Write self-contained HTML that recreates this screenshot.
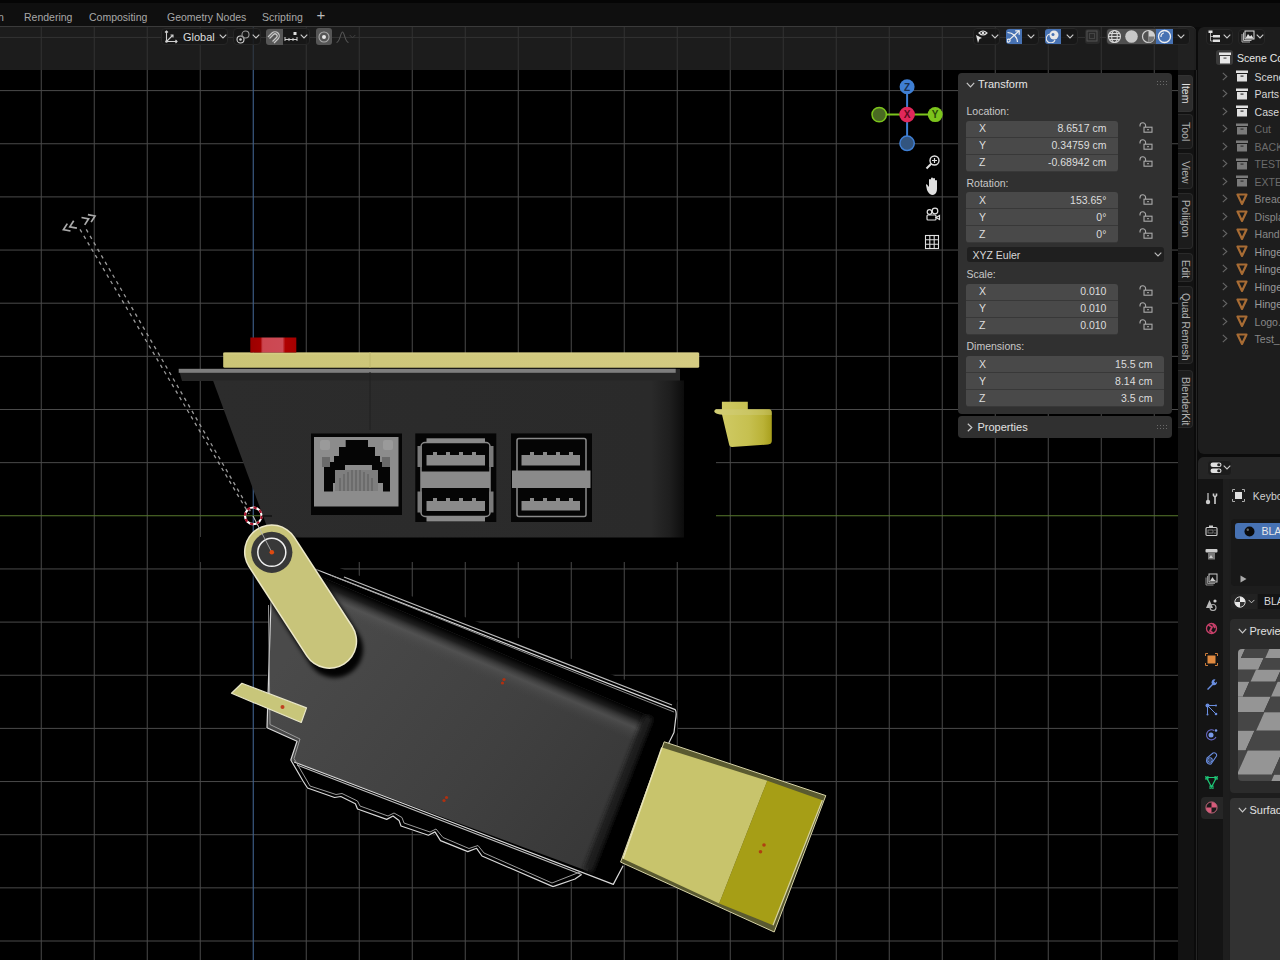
<!DOCTYPE html>
<html><head><meta charset="utf-8">
<style>
*{box-sizing:border-box}
html,body{margin:0;padding:0;width:1280px;height:960px;overflow:hidden;background:#0b0b0b;font-family:"Liberation Sans",sans-serif;font-size:10.5px;color:#ccc}
.a{position:absolute}
#top{left:0;top:0;width:1280px;height:27px;background:#0f0f0f;border-top:3px solid #050505}
.tab{position:absolute;top:7.7px;line-height:12px;color:#a8a8a8;font-size:10.5px;white-space:nowrap}
#vp{left:0;top:0}
#hdr{left:0;top:26px;width:1196px;height:44px;background:rgba(40,40,40,0.7);border-top:1px solid #3a3a3a;border-top-right-radius:6px}
.btn{position:absolute;border:1px solid #262626;background:rgba(22,22,22,0.7);border-radius:4px}
#npanel{left:958px;top:73px;width:214px;height:341px;background:#303030;border-radius:4px}
#props{left:958px;top:416px;width:214px;height:22px;background:#303030;border-radius:4px}
.lbl{position:absolute;color:#c8c8c8;font-size:10.5px;line-height:12px;white-space:nowrap}
.fld{position:absolute;left:8px;width:152px;height:17px;background:#494949;color:#ddd;border-bottom:1px solid #383838}
.fld .k{position:absolute;left:13px;top:1.9px;line-height:12px}
.fld .v{position:absolute;right:11.6px;top:1.9px;line-height:12px;white-space:nowrap}
.lock{position:absolute;left:181px;width:14px;height:11px}
.vtab{position:absolute;left:1178px;width:15px;background:#1c1c1c;border:1px solid #2a2a2a;border-left:none;border-radius:0 4px 4px 0}
.vtab span{position:absolute;line-height:12px;transform-origin:0 0;white-space:nowrap;color:#b0b0b0;font-size:10.5px}
#outl{left:1198px;top:27px;width:82px;height:427px;background:#1d1d1d;border-radius:6px 0 0 6px}
.orow{position:absolute;left:0;height:17px;width:82px;white-space:nowrap;font-size:10.5px}
#prop{left:1198px;top:457px;width:82px;height:503px;background:#1d1d1d;border-top-left-radius:6px}
</style></head><body>
<div class="a" id="top">
  <span class="tab" style="left:-2px">n</span>
  <span class="tab" style="left:24px">Rendering</span>
  <span class="tab" style="left:89px">Compositing</span>
  <span class="tab" style="left:167px">Geometry Nodes</span>
  <span class="tab" style="left:262px">Scripting</span>
  <span class="tab" style="left:316.5px;font-size:15px;top:5.5px;color:#bbb">+</span>
</div>
<!--VP-->
<svg class="a" id="vp" width="1196" height="960" viewBox="0 0 1196 960">
  <defs>
    <linearGradient id="red" x1="0" x2="1" y1="0" y2="0">
      <stop offset="0" stop-color="#9a0000"/><stop offset="0.22" stop-color="#a60000"/><stop offset="0.27" stop-color="#cc4650"/><stop offset="0.7" stop-color="#cc4a55"/><stop offset="0.76" stop-color="#b00000"/><stop offset="1" stop-color="#a40000"/>
    </linearGradient>
    <linearGradient id="casebody" x1="0" x2="1" y1="0" y2="0">
      <stop offset="0" stop-color="#2c2c2c"/><stop offset="0.93" stop-color="#2a2a2a"/><stop offset="0.97" stop-color="#1e1e1e"/><stop offset="1" stop-color="#0c0c0c"/>
    </linearGradient>
    <linearGradient id="board" gradientUnits="userSpaceOnUse" x1="330" y1="600" x2="620" y2="820">
      <stop offset="0" stop-color="#4a4a4a"/><stop offset="0.6" stop-color="#404040"/><stop offset="1" stop-color="#383838"/>
    </linearGradient>
    <linearGradient id="yel" x1="0" x2="1" y1="0" y2="0">
      <stop offset="0" stop-color="#cbc576"/><stop offset="1" stop-color="#d4cb82"/>
    </linearGradient>
    <linearGradient id="boardtop" gradientUnits="userSpaceOnUse" x1="400" y1="610.3" x2="388.3" y2="637.9">
      <stop offset="0" stop-color="#000" stop-opacity="1"/><stop offset="0.25" stop-color="#1a1a1a" stop-opacity="0.9"/><stop offset="0.55" stop-color="#5a5a5a" stop-opacity="0.55"/><stop offset="1" stop-color="#484848" stop-opacity="0"/>
    </linearGradient>
    <linearGradient id="knobg" gradientUnits="userSpaceOnUse" x1="714" y1="0" x2="772" y2="0">
      <stop offset="0" stop-color="#d2cd6a"/><stop offset="0.6" stop-color="#c6c050"/><stop offset="0.85" stop-color="#bab236"/><stop offset="1" stop-color="#a89f1c"/>
    </linearGradient>
    <filter id="blur2" filterUnits="userSpaceOnUse" x="0" y="0" width="1196" height="960"><feGaussianBlur stdDeviation="2"/></filter>
    <filter id="blur4" filterUnits="userSpaceOnUse" x="0" y="0" width="1196" height="960"><feGaussianBlur stdDeviation="4"/></filter>
    <filter id="soft"><feGaussianBlur stdDeviation="0.5"/></filter>
  </defs>
  <rect x="0" y="27" width="1196" height="933" fill="#000"/>
  <rect x="1178" y="27" width="18" height="933" fill="#121212"/><rect x="1194" y="27" width="4" height="933" fill="#0b0b0b"/>
  <!-- grid -->
  <path stroke="#4a4a4a" stroke-width="1" fill="none" d="M41.25 27V960M94.25 27V960M147.25 27V960M200.25 27V960M306.25 27V960M359.25 27V960M412.25 27V960M465.25 27V960M518.25 27V960M571.25 27V960M624.25 27V960M677.25 27V960M730.25 27V960M783.25 27V960M836.25 27V960M889.25 27V960M942.25 27V960M995.25 27V960M1048.25 27V960M1101.25 27V960M1154.25 27V960M0 37.45H1178M0 90.60H1178M0 143.75H1178M0 196.90H1178M0 250.05H1178M0 303.20H1178M0 356.35H1178M0 409.50H1178M0 462.65H1178M0 568.95H1178M0 622.10H1178M0 675.25H1178M0 728.40H1178M0 781.55H1178M0 834.70H1178M0 887.85H1178M0 941.00H1178"/>
  <path stroke="#40628e" stroke-width="1.1" d="M253.25 27V960"/>
  <path stroke="#587a2e" stroke-width="1.1" d="M0 515.8H1178"/>
  <!-- relationship dashed line -->
  <path d="M80 229.4L249 514M86.25 229.4L252 514" stroke="#9a9a9a" stroke-width="1.3" stroke-dasharray="3.5 4" fill="none"/>
  <path d="M253 516L271.8 552.3" stroke="#ccc" stroke-width="0.8" fill="none"/>
  <path d="M87.9 214.7L95 216L91.1 222.1M81.5 217.5L88.6 218.8L84.7 224.9M70.5 231L63.4 229.7L67.3 223.6M76.9 228.1L69.8 226.8L73.7 220.7" stroke="#aaa" stroke-width="1.7" fill="none"/>
  <!-- CASE halo -->
  <path d="M271 537H716V372H684V562H200Z" fill="#000"/><rect x="200" y="537" width="516" height="25" fill="#000"/>
  <!-- case lid -->
  <path d="M178.7 369H680V381H182Z" fill="#262626"/>
  <rect x="223" y="367" width="476" height="2" fill="#000"/><rect x="178.7" y="368.8" width="497" height="4" fill="#7e7e7e"/>
  <!-- case body -->
  <path d="M213 380.5H684V537.5H271Z" fill="url(#casebody)"/>
  <path d="M370 372V430" stroke="#202020" stroke-width="1"/>
  <!-- yellow bar -->
  <rect x="223.2" y="352.5" width="476" height="15.3" rx="1.5" fill="url(#yel)"/>
  <rect x="223.2" y="352.5" width="476" height="2" fill="#d8d08a" opacity="0.6"/>
  <path d="M370 352V368" stroke="#bdb56a" stroke-width="0.8"/>
  <!-- red button -->
  <rect x="250.3" y="337.5" width="46" height="15" fill="url(#red)"/>
  <!-- ethernet port -->
  <rect x="311" y="433.5" width="91" height="81.5" fill="#050505"/>
  <path fill="#8c8c8c" d="M314 437H398.5V506.5H314Z"/>
  <path fill="#050505" d="M345.7 440H368V447H375V456H380V462H390V491.5H383V483H377V473H372V465H345V473H339V483H333V491.5H324V462H334V456H339V447H345.7Z"/>
  <path fill="#7e7e7e" d="M335 470H378V491H335Z"/>
  <path stroke="#5a5a5a" stroke-width="1" d="M340 478V491M344 474V491M348 472V491M352 470V491M356 470V491M360 470V491M364 472V491M368 474V491M372 478V491"/>
  <rect x="322" y="457" width="8" height="10" fill="#6a6a6a"/>
  <rect x="382" y="457" width="8" height="10" fill="#6a6a6a"/>
  <rect x="320" y="440" width="10" height="10" rx="2" fill="#9a9a9a"/>
  <rect x="383" y="440" width="10" height="10" rx="2" fill="#9a9a9a"/>
  <!-- USB 1 -->
  <rect x="415.3" y="433.4" width="81" height="88.6" fill="#050505"/>
  <g fill="none" stroke="#8a8a8a" stroke-width="1.5">
    <rect x="421" y="442.5" width="69" height="74" rx="4"/>
  </g>
  <rect x="426.5" y="438.3" width="58.5" height="4" fill="#8a8a8a"/>
  <rect x="426.5" y="516.5" width="58.5" height="5" fill="#8a8a8a"/>
  <rect x="417.5" y="446" width="4.5" height="21" fill="#7a7a7a"/><rect x="489" y="446" width="4.5" height="21" fill="#7a7a7a"/>
  <rect x="417.5" y="491.5" width="4.5" height="21" fill="#7a7a7a"/><rect x="489" y="491.5" width="4.5" height="21" fill="#7a7a7a"/>
  <rect x="421" y="471.5" width="69" height="16.5" fill="#8a8a8a"/>
  <rect x="426.5" y="455" width="58.5" height="10.5" fill="#8a8a8a"/>
  <rect x="426.5" y="501" width="58.5" height="10" fill="#8a8a8a"/>
  <path fill="#8a8a8a" d="M433 452h4v4h-4zM446 452h4v4h-4zM459 452h4v4h-4zM472 452h4v4h-4zM433 498h4v4h-4zM446 498h4v4h-4zM459 498h4v4h-4zM472 498h4v4h-4z"/>
  <!-- USB 2 -->
  <rect x="511" y="433.4" width="81" height="88.6" fill="#050505"/>
  <g fill="none" stroke="#8a8a8a" stroke-width="1.5">
    <rect x="517" y="438.5" width="69" height="78" rx="2"/>
  </g>
  <rect x="512" y="470.5" width="78.5" height="17.5" fill="#8a8a8a"/>
  <rect x="521.5" y="455" width="58.5" height="10.5" fill="#8a8a8a"/>
  <rect x="521.5" y="501" width="58.5" height="9.5" fill="#8a8a8a"/>
  <path fill="#8a8a8a" d="M530 452h4v4h-4zM543 452h4v4h-4zM556 452h4v4h-4zM569 452h4v4h-4zM530 498h4v4h-4zM543 498h4v4h-4zM556 498h4v4h-4zM569 498h4v4h-4z"/>
  <!-- knob -->
  <path fill="url(#knobg)" d="M721.9 401.7H747.8V409.3H769Q771.8 409.3 771.8 413V441Q771.8 444 768 444.5L732 447Q729.5 447 729 444L722 414.5Q716 414 714.5 412Q714 410 716 409.3H721.9Z"/>
  <path fill="#d4d08a" opacity="0.35" d="M716 409.3H769Q771.8 409.3 771.8 413V415H722Q716 414 714.5 412Q714 410 716 409.3Z"/>
  <!-- 3D cursor -->
  <circle cx="253.3" cy="515.8" r="8.3" fill="none" stroke="#fff" stroke-width="2.2"/>
  <circle cx="253.3" cy="515.8" r="8.3" fill="none" stroke="#a8142c" stroke-width="2.2" stroke-dasharray="3.25 3.25"/>
  <path d="M262 516H272" stroke="#111" stroke-width="1.4"/>
    <!-- board halo -->
  <path d="M268 545L675.2 709.6L676 732.5L665.8 749L620.6 862.1L613.3 884.4L581.6 874.5L575 879L553 886.6L482 856L476.6 848.3L467.8 851.6L440.5 840.6L435 831.9L428.4 835.2L401 826L399 820.4L393 816L386.7 819.4L357.5 809L355.4 803.75L340.8 796.5L334.6 797.5L307.5 788L303 781L290.8 760L297 741.25L267 727.7L271 601L244 556Z" fill="#000" stroke="#000" stroke-width="3" stroke-linejoin="round"/>
  <path d="M300 560L675 707" stroke="#000" stroke-width="14"/>
  <!-- board body -->
  <path d="M272 556L649 716L588 871.3L294 762L290.8 760L297 741.25L267 727.7L271 604Z" fill="url(#board)"/>
  <!-- top black band + highlight -->
  <path d="M272 556L649 716L588 871.3L294 762L290.8 760L297 741.25L267 727.7L271 604Z" fill="url(#boardtop)"/>
  
  <!-- right edge dark band -->
  <path d="M649 716L675 712L675 732L666 749L620 862L613 884L588 871.3Z" fill="#000"/>
  <path d="M649 716L588 871.3" stroke="#1a1a1a" stroke-width="10" filter="url(#blur2)"/>
  <!-- outlines -->
  <g fill="none" stroke="#d8d8d8" stroke-width="1.2" stroke-linejoin="round">
    <path d="M315 569L675.2 709.6Q677 712 675.5 720L674 732.5L665.8 749"/>
    <path d="M344 577L672 705" stroke="#bbb"/>
    <path d="M330 575L674 712" stroke="#999" stroke-width="0.9"/>
    <path d="M271 601L267 727.7L297 741.25L290.8 760L303 781L307.5 788L334.6 797.5L340.8 796.5L355.4 803.75L357.5 809L386.7 819.4L393 816L399 820.4L401 826L428.4 835.2L435 831.9L440.5 840.6L467.8 851.6L476.6 848.3L482 856L553 886.6L575 879L581.6 874.5"/>
    <path d="M294 762L400 802.3L613.3 884.4L623.1 865.8"/>
    <path d="M297 765L581.6 874.5" stroke="#bbb"/>
    <path d="M268.5 605L270 724.5L300 739L294 758.5L306 779L310 786L336 794.5L342 793.5L357.5 801L360 806L388 816L394 813L402 817.5L404 823L430 832L436 829L443 837.5L469 848.5L478 845.5L484 853L552 883L580 872" stroke="#9a9a9a" stroke-width="1"/>
  </g>
  <!-- red dots on board -->
  <circle cx="502.5" cy="683" r="1.6" fill="#b03010"/><circle cx="504" cy="679.5" r="1.6" fill="#b03010"/>
  <circle cx="444" cy="800.5" r="1.6" fill="#b03010"/><circle cx="446.5" cy="797.5" r="1.6" fill="#b03010"/>
  <!-- yellow USB block -->
  <path d="M664.2 741.8L825.8 795.6L774.2 932L620.6 862.1Z" fill="#5a5a30" stroke="#d8d4a8" stroke-width="1"/>
  <path d="M661.9 747.5L767.3 780.7L719.2 903.4L623 858.7Z" fill="#c8c46c"/>
  <path d="M767.3 780.7L822.4 800.2L773 925.2L719.2 903.4Z" fill="#a69e16"/>
  <path d="M661.9 747.5L623 858.7" stroke="#e8e4b8" stroke-width="1.5"/>
  <path d="M822.4 800.2L773 925.2" stroke="#d8d4a0" stroke-width="1.2"/>
  <circle cx="764" cy="845" r="1.8" fill="#b04010"/><circle cx="760.5" cy="851.8" r="1.8" fill="#b04010"/>
  <!-- small yellow tab -->
  <path d="M231.5 693.3L241.9 683.3L306.5 707.9L301.25 722.5Z" fill="#c8c67a" stroke="#e8e6c8" stroke-width="1.2" stroke-linejoin="round"/>
  <circle cx="282.5" cy="706.9" r="2" fill="#c04020"/>
  <!-- hinge arm -->
  <line x1="271.7" y1="552" x2="329.5" y2="641.2" stroke="#000" stroke-width="57" stroke-linecap="round" transform="translate(5,8)" filter="url(#blur2)" opacity="0.95"/>
  <line x1="271.7" y1="552" x2="329.5" y2="641.2" stroke="#ece8c8" stroke-width="55.5" stroke-linecap="round"/>
  <line x1="271.7" y1="552" x2="329.5" y2="641.2" stroke="#c8c47a" stroke-width="52.5" stroke-linecap="round"/>
  <circle cx="271.8" cy="552.3" r="20.6" fill="#383838"/>
  <circle cx="271.8" cy="552.3" r="14" fill="none" stroke="#f0f0f0" stroke-width="1.5"/>
  <path d="M253 516L271.8 552.3" stroke="#bbb" stroke-width="0.8" fill="none"/>
  <circle cx="271.8" cy="552.3" r="2.3" fill="#e04a10"/>

  <!-- nav gizmo -->
  <path d="M907.1 86.8V143.3" stroke="#3f7fd4" stroke-width="2"/>
  <path d="M879.2 114.6H935.2" stroke="#7cc41c" stroke-width="2"/>
  <circle cx="907.1" cy="143.3" r="7.2" fill="#33557f" stroke="#3f7fd4" stroke-width="1.5"/>
  <circle cx="879.2" cy="114.6" r="7.2" fill="#4a6a22" stroke="#7cc41c" stroke-width="1.5"/>
  <circle cx="907.1" cy="86.8" r="7.5" fill="#3f7fd4"/>
  <circle cx="935.2" cy="114.6" r="7.5" fill="#7cc41c"/>
  <circle cx="907.1" cy="114.6" r="7.8" fill="#e0285a"/>
  <text x="907.1" y="90.5" font-size="10" font-family="Liberation Sans" font-weight="bold" fill="#1a3050" text-anchor="middle">Z</text>
  <text x="935.2" y="118.3" font-size="10" font-family="Liberation Sans" font-weight="bold" fill="#2a4a08" text-anchor="middle">Y</text>
  <text x="907.1" y="118.3" font-size="10" font-family="Liberation Sans" font-weight="bold" fill="#5a0a20" text-anchor="middle">X</text>
  <!-- zoom -->
  <g fill="none" stroke="#e0e0e0" stroke-width="1.4">
    <circle cx="934.5" cy="160.5" r="4.5"/><path d="M931.2 163.8L926.5 168.5" stroke-width="2"/><path d="M934.5 158V163M932 160.5H937" stroke-width="1.2"/>
  </g>
  <!-- hand -->
  <path d="M927 190L926 185Q926 184 927 184.5L929 187V180Q929 179 930 179Q931 179 931 180V186V178.5Q931 177.5 932 177.5Q933 177.5 933 178.5V186V179Q933 178 934 178Q935 178 935 179V186V181Q935 180 936 180Q937 180 937 181V189Q937 194 933 195Q929 195 927 190Z" fill="#e0e0e0"/>
  <!-- camera -->
  <g fill="none" stroke="#e0e0e0" stroke-width="1.2">
    <circle cx="929.5" cy="212" r="2.3"/><circle cx="935" cy="211" r="2.8"/><rect x="927" y="215" width="9" height="5" rx="1"/><path d="M936 217.5L939.5 215.5V219.5Z"/>
  </g>
  <!-- grid icon -->
  <g fill="none" stroke="#e0e0e0" stroke-width="1.1">
    <rect x="925.5" y="235.5" width="13" height="13"/><path d="M929.8 235.5V248.5M934.2 235.5V248.5M925.5 239.8H938.5M925.5 244.2H938.5"/>
  </g>
</svg>

<div class="a" style="left:1195.5px;top:70px;width:1px;height:890px;background:#252525"></div>
<div class="a" id="hdr">
  <!-- Global -->
  <div class="btn" style="left:160.6px;top:1.4px;width:67.2px;height:16.9px"></div>
  <svg class="a" style="left:164px;top:3px" width="14" height="14" viewBox="0 0 14 14"><g fill="none" stroke="#d0d0d0" stroke-width="1.1"><path d="M2.5 1V11.5H13"/><path d="M1 2.5L2.5 1L4 2.5M11.5 10L13 11.5L11.5 13"/><path d="M2.5 11.5L9 5M6.5 5H9V7.5"/></g><circle cx="2.5" cy="11.5" r="1.3" fill="#d0d0d0"/></svg>
  <span class="lbl" style="left:183px;top:3.5px;color:#dcdcdc;font-size:11px">Global</span>
  <svg class="a" style="left:219px;top:7px" width="8" height="5" viewBox="0 0 8 5"><path d="M0.7 0.7L4 4L7.3 0.7" fill="none" stroke="#ccc" stroke-width="1.1"/></svg>
  <!-- pivot -->
  <div class="btn" style="left:233px;top:1.4px;width:27.6px;height:16.9px"></div>
  <svg class="a" style="left:236px;top:3px" width="14" height="14" viewBox="0 0 14 14"><g fill="none" stroke="#d0d0d0" stroke-width="1.1"><circle cx="4.5" cy="9.5" r="3.5"/><circle cx="9.5" cy="4.5" r="3.5" stroke="#999"/></g><circle cx="4.5" cy="9.5" r="1.3" fill="#d0d0d0"/></svg>
  <svg class="a" style="left:252px;top:7px" width="8" height="5" viewBox="0 0 8 5"><path d="M0.7 0.7L4 4L7.3 0.7" fill="none" stroke="#ccc" stroke-width="1.1"/></svg>
  <!-- snap -->
  <div class="btn" style="left:265.6px;top:1.4px;width:44.4px;height:16.9px"></div>
  <div class="a" style="left:266px;top:1.8px;width:16.6px;height:16px;background:#565656;border-radius:3px 0 0 3px"></div>
  <svg class="a" style="left:267px;top:3px" width="14" height="14" viewBox="0 0 14 14"><path d="M2.5 8.5L6.5 4.5A2.1 2.1 0 0 1 9.5 7.5L5.5 11.5M1 7L5 3A4.2 4.2 0 0 1 11 9L7 13" fill="none" stroke="#c8c8c8" stroke-width="1.2"/></svg>
  <svg class="a" style="left:284px;top:4px" width="14" height="12" viewBox="0 0 14 12"><g stroke="#d0d0d0" stroke-width="1"><path d="M1 6V10M5 7V10M9 7V10M13 6V10M1 8.5H13"/></g><rect x="9.5" y="1" width="3" height="3" fill="#e0e0e0"/></svg>
  <svg class="a" style="left:300px;top:7px" width="8" height="5" viewBox="0 0 8 5"><path d="M0.7 0.7L4 4L7.3 0.7" fill="none" stroke="#ccc" stroke-width="1.1"/></svg>
  <!-- proportional -->
  <div class="a" style="left:315.6px;top:1.4px;width:16.4px;height:16.9px;background:#565656;border-radius:3px"></div>
  <svg class="a" style="left:317px;top:3px" width="14" height="14" viewBox="0 0 14 14"><circle cx="7" cy="7" r="5" fill="none" stroke="#aaa" stroke-width="1.1"/><circle cx="7" cy="7" r="2" fill="#e8e8e8"/></svg>
  <svg class="a" style="left:336px;top:3px" width="13" height="14" viewBox="0 0 13 14"><path d="M0.5 12.5C4 12.5 4.5 2 6.5 2C8.5 2 9 12.5 12.5 12.5" fill="none" stroke="#555" stroke-width="1.1"/></svg>
  <svg class="a" style="left:349px;top:7px" width="7" height="5" viewBox="0 0 8 5"><path d="M0.7 0.7L4 4L7.3 0.7" fill="none" stroke="#444" stroke-width="1.1"/></svg>
  <!-- right side -->
  <div class="btn" style="left:972.75px;top:1.1px;width:27.5px;height:16.5px"></div>
  <svg class="a" style="left:974px;top:2px" width="15" height="15" viewBox="0 0 15 15"><path d="M5 4Q9 0 13 4Q9 8 5 4Z" fill="none" stroke="#ddd" stroke-width="1.1"/><circle cx="9" cy="4" r="1.3" fill="#ddd"/><path d="M2 6L8 9L5.5 10L4 14Z" fill="#e0e0e0"/></svg>
  <svg class="a" style="left:991px;top:7px" width="8" height="5" viewBox="0 0 8 5"><path d="M0.7 0.7L4 4L7.3 0.7" fill="none" stroke="#ccc" stroke-width="1.1"/></svg>
  <div class="btn" style="left:1005.6px;top:1.1px;width:33.2px;height:16.5px"></div>
  <div class="a" style="left:1005.6px;top:1.5px;width:16.3px;height:15.8px;background:#4772b3;border-radius:3px 0 0 3px"></div>
  <svg class="a" style="left:1007px;top:2px" width="14" height="14" viewBox="0 0 14 14"><g fill="none" stroke="#f0f0f0" stroke-width="1.2"><path d="M0.5 3.5A10 10 0 0 1 10.5 13"/><path d="M2.4 10.6L12.2 1.8"/><path d="M8.2 1.8H12.2V5.8"/><circle cx="1.6" cy="11.6" r="1.5"/></g></svg>
  <svg class="a" style="left:1027px;top:7px" width="8" height="5" viewBox="0 0 8 5"><path d="M0.7 0.7L4 4L7.3 0.7" fill="none" stroke="#ccc" stroke-width="1.1"/></svg>
  <div class="btn" style="left:1045px;top:1.1px;width:33px;height:16.5px"></div>
  <div class="a" style="left:1045px;top:1.5px;width:16.3px;height:15.8px;background:#4772b3;border-radius:3px 0 0 3px"></div>
  <svg class="a" style="left:1046px;top:2px" width="14" height="14" viewBox="0 0 14 14"><circle cx="8" cy="6" r="4.5" fill="#e8e8e8"/><path d="M4 5A4.5 4.5 0 1 0 9 11" fill="none" stroke="#e8e8e8" stroke-width="1.2"/><circle cx="7" cy="5.5" r="1.5" fill="#4772b3"/></svg>
  <svg class="a" style="left:1066px;top:7px" width="8" height="5" viewBox="0 0 8 5"><path d="M0.7 0.7L4 4L7.3 0.7" fill="none" stroke="#ccc" stroke-width="1.1"/></svg>
  <div class="a" style="left:1084.7px;top:1.5px;width:15px;height:15.8px;background:#2a2a2a;border-radius:3px"></div>
  <svg class="a" style="left:1086px;top:3px" width="12" height="12" viewBox="0 0 12 12"><rect x="1" y="1" width="10" height="10" fill="none" stroke="#555" stroke-width="1"/><rect x="3.5" y="3.5" width="5" height="5" fill="none" stroke="#444" stroke-width="1"/></svg>
  <div class="btn" style="left:1106.25px;top:1.1px;width:83.5px;height:16.5px"></div>
  <div class="a" style="left:1106.5px;top:1.5px;width:49.5px;height:15.8px;background:#505050;border-radius:3px 0 0 3px"></div>
  <div class="a" style="left:1156px;top:1.5px;width:17px;height:15.8px;background:#4772b3"></div>
  <svg class="a" style="left:1107px;top:2px" width="15" height="15" viewBox="0 0 15 15"><g fill="none" stroke="#d8d8d8" stroke-width="1.1"><circle cx="7.5" cy="7.5" r="6"/><ellipse cx="7.5" cy="7.5" rx="2.8" ry="6"/><path d="M1.5 7.5H13.5M2.5 4.5H12.5M2.5 10.5H12.5"/></g></svg>
  <svg class="a" style="left:1124px;top:2px" width="15" height="15" viewBox="0 0 15 15"><circle cx="7.5" cy="7.5" r="6.3" fill="#c8c8c8"/></svg>
  <svg class="a" style="left:1141px;top:2px" width="15" height="15" viewBox="0 0 15 15"><circle cx="7.5" cy="7.5" r="6" fill="none" stroke="#d0d0d0" stroke-width="1.2"/><path d="M7.5 1.5A6 6 0 0 1 7.5 13.5Z" fill="#d0d0d0"/><path d="M7.5 7.5H13.5A6 6 0 0 1 7.5 13.5Z" fill="#777"/></svg>
  <svg class="a" style="left:1157px;top:2px" width="15" height="15" viewBox="0 0 15 15"><circle cx="7.5" cy="7.5" r="6" fill="none" stroke="#f0f0f0" stroke-width="1.3"/><path d="M4 8A3.5 3.5 0 0 1 7 4" fill="none" stroke="#f0f0f0" stroke-width="1.2"/></svg>
  <svg class="a" style="left:1177px;top:7px" width="8" height="5" viewBox="0 0 8 5"><path d="M0.7 0.7L4 4L7.3 0.7" fill="none" stroke="#ccc" stroke-width="1.1"/></svg>
</div>

<div class="a" id="npanel">
  <svg class="a" style="left:8px;top:9px" width="9" height="6" viewBox="0 0 9 6"><path d="M0.8 0.8L4.5 4.8L8.2 0.8" fill="none" stroke="#c8c8c8" stroke-width="1.2"/></svg>
  <span class="lbl" style="left:20px;top:5px;color:#e4e4e4;font-size:11px">Transform</span>
  <svg class="a" style="left:199px;top:8px" width="10" height="5" viewBox="0 0 10 5"><g fill="#6a6a6a"><rect x="0" y="0" width="1" height="1"/><rect x="3" y="0" width="1" height="1"/><rect x="6" y="0" width="1" height="1"/><rect x="9" y="0" width="1" height="1"/><rect x="0" y="3" width="1" height="1"/><rect x="3" y="3" width="1" height="1"/><rect x="6" y="3" width="1" height="1"/><rect x="9" y="3" width="1" height="1"/></g></svg>
  <span class="lbl" style="left:8.5px;top:31.5px">Location:</span>
  <div class="fld" style="top:47.5px;border-radius:3px 3px 0 0"><span class="k">X</span><span class="v">8.6517 cm</span></div>
  <div class="fld" style="top:64.5px"><span class="k">Y</span><span class="v">0.34759 cm</span></div>
  <div class="fld" style="top:81.5px;border-radius:0 0 3px 3px"><span class="k">Z</span><span class="v">-0.68942 cm</span></div>
  <span class="lbl" style="left:8.5px;top:103.7px">Rotation:</span>
  <div class="fld" style="top:119.4px;border-radius:3px 3px 0 0"><span class="k">X</span><span class="v">153.65°</span></div>
  <div class="fld" style="top:136.4px"><span class="k">Y</span><span class="v">0°</span></div>
  <div class="fld" style="top:153.4px;border-radius:0 0 3px 3px"><span class="k">Z</span><span class="v">0°</span></div>
  <div class="a" style="left:8.5px;top:174px;width:197px;height:15px;background:#1f1f1f;border-radius:3px"><span class="lbl" style="left:6px;top:1.5px;color:#d8d8d8">XYZ Euler</span>
    <svg class="a" style="left:187px;top:5px" width="8" height="5" viewBox="0 0 8 5"><path d="M0.7 0.7L4 4L7.3 0.7" fill="none" stroke="#bbb" stroke-width="1.1"/></svg></div>
  <span class="lbl" style="left:8.5px;top:195.1px">Scale:</span>
  <div class="fld" style="top:210.5px;border-radius:3px 3px 0 0"><span class="k">X</span><span class="v">0.010</span></div>
  <div class="fld" style="top:227.5px"><span class="k">Y</span><span class="v">0.010</span></div>
  <div class="fld" style="top:244.5px;border-radius:0 0 3px 3px"><span class="k">Z</span><span class="v">0.010</span></div>
  <span class="lbl" style="left:8.5px;top:267px">Dimensions:</span>
  <div class="fld" style="top:282.8px;width:198px;border-radius:3px 3px 0 0"><span class="k">X</span><span class="v">15.5 cm</span></div>
  <div class="fld" style="top:299.8px;width:198px"><span class="k">Y</span><span class="v">8.14 cm</span></div>
  <div class="fld" style="top:316.8px;width:198px;border-radius:0 0 3px 3px"><span class="k">Z</span><span class="v">3.5 cm</span></div>
  <svg class="a" style="left:181px;top:48.7px" width="14" height="12" viewBox="0 0 14 12"><path d="M1 4.5V3.5A2.8 2.8 0 0 1 6.6 3.5V5" fill="none" stroke="#aaa" stroke-width="1.1"/><rect x="5" y="5.2" width="8" height="5" fill="none" stroke="#aaa" stroke-width="1.1"/><rect x="8" y="7.2" width="2" height="1" fill="#aaa"/></svg>
<svg class="a" style="left:181px;top:65.7px" width="14" height="12" viewBox="0 0 14 12"><path d="M1 4.5V3.5A2.8 2.8 0 0 1 6.6 3.5V5" fill="none" stroke="#aaa" stroke-width="1.1"/><rect x="5" y="5.2" width="8" height="5" fill="none" stroke="#aaa" stroke-width="1.1"/><rect x="8" y="7.2" width="2" height="1" fill="#aaa"/></svg>
<svg class="a" style="left:181px;top:82.7px" width="14" height="12" viewBox="0 0 14 12"><path d="M1 4.5V3.5A2.8 2.8 0 0 1 6.6 3.5V5" fill="none" stroke="#aaa" stroke-width="1.1"/><rect x="5" y="5.2" width="8" height="5" fill="none" stroke="#aaa" stroke-width="1.1"/><rect x="8" y="7.2" width="2" height="1" fill="#aaa"/></svg>
<svg class="a" style="left:181px;top:120.6px" width="14" height="12" viewBox="0 0 14 12"><path d="M1 4.5V3.5A2.8 2.8 0 0 1 6.6 3.5V5" fill="none" stroke="#aaa" stroke-width="1.1"/><rect x="5" y="5.2" width="8" height="5" fill="none" stroke="#aaa" stroke-width="1.1"/><rect x="8" y="7.2" width="2" height="1" fill="#aaa"/></svg>
<svg class="a" style="left:181px;top:137.6px" width="14" height="12" viewBox="0 0 14 12"><path d="M1 4.5V3.5A2.8 2.8 0 0 1 6.6 3.5V5" fill="none" stroke="#aaa" stroke-width="1.1"/><rect x="5" y="5.2" width="8" height="5" fill="none" stroke="#aaa" stroke-width="1.1"/><rect x="8" y="7.2" width="2" height="1" fill="#aaa"/></svg>
<svg class="a" style="left:181px;top:154.6px" width="14" height="12" viewBox="0 0 14 12"><path d="M1 4.5V3.5A2.8 2.8 0 0 1 6.6 3.5V5" fill="none" stroke="#aaa" stroke-width="1.1"/><rect x="5" y="5.2" width="8" height="5" fill="none" stroke="#aaa" stroke-width="1.1"/><rect x="8" y="7.2" width="2" height="1" fill="#aaa"/></svg>
<svg class="a" style="left:181px;top:211.7px" width="14" height="12" viewBox="0 0 14 12"><path d="M1 4.5V3.5A2.8 2.8 0 0 1 6.6 3.5V5" fill="none" stroke="#aaa" stroke-width="1.1"/><rect x="5" y="5.2" width="8" height="5" fill="none" stroke="#aaa" stroke-width="1.1"/><rect x="8" y="7.2" width="2" height="1" fill="#aaa"/></svg>
<svg class="a" style="left:181px;top:228.7px" width="14" height="12" viewBox="0 0 14 12"><path d="M1 4.5V3.5A2.8 2.8 0 0 1 6.6 3.5V5" fill="none" stroke="#aaa" stroke-width="1.1"/><rect x="5" y="5.2" width="8" height="5" fill="none" stroke="#aaa" stroke-width="1.1"/><rect x="8" y="7.2" width="2" height="1" fill="#aaa"/></svg>
<svg class="a" style="left:181px;top:245.7px" width="14" height="12" viewBox="0 0 14 12"><path d="M1 4.5V3.5A2.8 2.8 0 0 1 6.6 3.5V5" fill="none" stroke="#aaa" stroke-width="1.1"/><rect x="5" y="5.2" width="8" height="5" fill="none" stroke="#aaa" stroke-width="1.1"/><rect x="8" y="7.2" width="2" height="1" fill="#aaa"/></svg>

</div>
<div class="a" id="props">
  <svg class="a" style="left:9px;top:7px" width="6" height="9" viewBox="0 0 6 9"><path d="M0.8 0.8L4.8 4.5L0.8 8.2" fill="none" stroke="#c8c8c8" stroke-width="1.2"/></svg>
  <span class="lbl" style="left:19.5px;top:5px;color:#e0e0e0;font-size:11px">Properties</span>
  <svg class="a" style="left:199px;top:9px" width="10" height="5" viewBox="0 0 10 5"><g fill="#6a6a6a"><rect x="0" y="0" width="1" height="1"/><rect x="3" y="0" width="1" height="1"/><rect x="6" y="0" width="1" height="1"/><rect x="9" y="0" width="1" height="1"/><rect x="0" y="3" width="1" height="1"/><rect x="3" y="3" width="1" height="1"/><rect x="6" y="3" width="1" height="1"/><rect x="9" y="3" width="1" height="1"/></g></svg>
</div>
<div class="vtab" style="top:75px;height:36.6px;background:#2d2d2d;border-color:#333"><span style="color:#e0e0e0;left:14.4px;top:7px;transform:rotate(90deg)">Item</span></div>
<div class="vtab" style="top:114.4px;height:34.6px"><span style="left:14.4px;top:7px;transform:rotate(90deg)">Tool</span></div>
<div class="vtab" style="top:152.8px;height:36.6px"><span style="left:14.4px;top:7px;transform:rotate(90deg)">View</span></div>
<div class="vtab" style="top:193px;height:55.5px"><span style="left:14.4px;top:6px;transform:rotate(90deg)">Poliigon</span></div>
<div class="vtab" style="top:252.9px;height:29.1px"><span style="left:14.4px;top:6px;transform:rotate(90deg)">Edit</span></div>
<div class="vtab" style="top:286.4px;height:77.3px"><span style="left:14.4px;top:6px;transform:rotate(90deg)">Quad Remesh</span></div>
<div class="vtab" style="top:369.5px;height:58.3px"><span style="left:14.4px;top:6px;transform:rotate(90deg)">BlenderKit</span></div>

<div class="a" id="outl">
<div class="btn" style="left:7.5px;top:1.6px;width:27.5px;height:16px;background:#1a1a1a"></div>
<svg class="a" style="left:10px;top:3px" width="14" height="13" viewBox="0 0 14 13"><g fill="#e0e0e0"><rect x="0.5" y="0.5" width="4" height="2.5"/><rect x="5" y="5" width="7" height="2.5"/><rect x="5" y="9.5" width="7" height="2.5"/></g><path d="M2.5 3V11H5M2.5 6.5H5" fill="none" stroke="#bbb" stroke-width="0.9"/></svg>
<svg class="a" style="left:25px;top:7px" width="8" height="5" viewBox="0 0 8 5"><path d="M0.7 0.7L4 4L7.3 0.7" fill="none" stroke="#ccc" stroke-width="1.1"/></svg>
<div class="btn" style="left:40px;top:1.6px;width:27px;height:16px;background:#1a1a1a"></div>
<svg class="a" style="left:43px;top:3px" width="14" height="13" viewBox="0 0 14 13"><path d="M1 4V12H9" fill="none" stroke="#bbb" stroke-width="0.9"/><path d="M2.5 2.5V10.5H10.5" fill="none" stroke="#ccc" stroke-width="0.9"/><rect x="4" y="1" width="9" height="8" fill="none" stroke="#e0e0e0" stroke-width="1"/><path d="M4.5 8.5L7 4L9 6.5L10.5 5L12.5 8.5Z" fill="#e0e0e0"/></svg>
<svg class="a" style="left:58px;top:7px" width="8" height="5" viewBox="0 0 8 5"><path d="M0.7 0.7L4 4L7.3 0.7" fill="none" stroke="#ccc" stroke-width="1.1"/></svg>
<div class="a" style="left:18.4px;top:23.4px;width:16.4px;height:15px;background:#3a3a3a;border-radius:3px"></div>
<svg class="a" style="left:20.5px;top:25px" width="12" height="12" viewBox="0 0 12 12"><rect x="0" y="0.5" width="12" height="2.5" fill="#e8e8e8"/><rect x="1" y="4" width="10" height="7.5" fill="#e8e8e8"/><rect x="4.5" y="5.5" width="3" height="1.2" fill="#555"/></svg>
<span class="lbl" style="left:39px;top:25.4px;color:#e8e8e8">Scene Collection</span>
<svg class="a" style="left:24px;top:44.5px" width="6" height="9" viewBox="0 0 6 9"><path d="M0.8 0.8L4.8 4.5L0.8 8.2" fill="none" stroke="#666" stroke-width="1.1"/></svg>
<svg class="a" style="left:38px;top:43.0px" width="12" height="12" viewBox="0 0 12 12"><rect x="0" y="0.5" width="12" height="2.5" fill="#e0e0e0"/><rect x="1" y="4" width="10" height="7.5" fill="#e0e0e0"/><rect x="4.5" y="5.5" width="3" height="1.2" fill="#333"/></svg>
<span class="lbl" style="left:56.6px;top:43.8px;color:#d8d8d8">Scene_objects</span>
<svg class="a" style="left:24px;top:62.0px" width="6" height="9" viewBox="0 0 6 9"><path d="M0.8 0.8L4.8 4.5L0.8 8.2" fill="none" stroke="#666" stroke-width="1.1"/></svg>
<svg class="a" style="left:38px;top:60.5px" width="12" height="12" viewBox="0 0 12 12"><rect x="0" y="0.5" width="12" height="2.5" fill="#e0e0e0"/><rect x="1" y="4" width="10" height="7.5" fill="#e0e0e0"/><rect x="4.5" y="5.5" width="3" height="1.2" fill="#333"/></svg>
<span class="lbl" style="left:56.6px;top:61.3px;color:#d8d8d8">Parts</span>
<svg class="a" style="left:24px;top:79.5px" width="6" height="9" viewBox="0 0 6 9"><path d="M0.8 0.8L4.8 4.5L0.8 8.2" fill="none" stroke="#666" stroke-width="1.1"/></svg>
<svg class="a" style="left:38px;top:78.0px" width="12" height="12" viewBox="0 0 12 12"><rect x="0" y="0.5" width="12" height="2.5" fill="#e0e0e0"/><rect x="1" y="4" width="10" height="7.5" fill="#e0e0e0"/><rect x="4.5" y="5.5" width="3" height="1.2" fill="#333"/></svg>
<span class="lbl" style="left:56.6px;top:78.8px;color:#d8d8d8">Case</span>
<svg class="a" style="left:24px;top:97.0px" width="6" height="9" viewBox="0 0 6 9"><path d="M0.8 0.8L4.8 4.5L0.8 8.2" fill="none" stroke="#666" stroke-width="1.1"/></svg>
<svg class="a" style="left:38px;top:95.5px" width="12" height="12" viewBox="0 0 12 12"><rect x="0" y="0.5" width="12" height="2.5" fill="#7a7a7a"/><rect x="1" y="4" width="10" height="7.5" fill="#7a7a7a"/><rect x="4.5" y="5.5" width="3" height="1.2" fill="#333"/></svg>
<span class="lbl" style="left:56.6px;top:96.3px;color:#6c6c6c">Cut</span>
<svg class="a" style="left:24px;top:114.5px" width="6" height="9" viewBox="0 0 6 9"><path d="M0.8 0.8L4.8 4.5L0.8 8.2" fill="none" stroke="#666" stroke-width="1.1"/></svg>
<svg class="a" style="left:38px;top:113.0px" width="12" height="12" viewBox="0 0 12 12"><rect x="0" y="0.5" width="12" height="2.5" fill="#7a7a7a"/><rect x="1" y="4" width="10" height="7.5" fill="#7a7a7a"/><rect x="4.5" y="5.5" width="3" height="1.2" fill="#333"/></svg>
<span class="lbl" style="left:56.6px;top:113.8px;color:#6c6c6c">BACKUP</span>
<svg class="a" style="left:24px;top:132.0px" width="6" height="9" viewBox="0 0 6 9"><path d="M0.8 0.8L4.8 4.5L0.8 8.2" fill="none" stroke="#666" stroke-width="1.1"/></svg>
<svg class="a" style="left:38px;top:130.5px" width="12" height="12" viewBox="0 0 12 12"><rect x="0" y="0.5" width="12" height="2.5" fill="#7a7a7a"/><rect x="1" y="4" width="10" height="7.5" fill="#7a7a7a"/><rect x="4.5" y="5.5" width="3" height="1.2" fill="#333"/></svg>
<span class="lbl" style="left:56.6px;top:131.3px;color:#6c6c6c">TEST_PARTS</span>
<svg class="a" style="left:24px;top:149.5px" width="6" height="9" viewBox="0 0 6 9"><path d="M0.8 0.8L4.8 4.5L0.8 8.2" fill="none" stroke="#666" stroke-width="1.1"/></svg>
<svg class="a" style="left:38px;top:148.0px" width="12" height="12" viewBox="0 0 12 12"><rect x="0" y="0.5" width="12" height="2.5" fill="#7a7a7a"/><rect x="1" y="4" width="10" height="7.5" fill="#7a7a7a"/><rect x="4.5" y="5.5" width="3" height="1.2" fill="#333"/></svg>
<span class="lbl" style="left:56.6px;top:148.8px;color:#6c6c6c">EXTERNAL</span>
<svg class="a" style="left:24px;top:167.0px" width="6" height="9" viewBox="0 0 6 9"><path d="M0.8 0.8L4.8 4.5L0.8 8.2" fill="none" stroke="#666" stroke-width="1.1"/></svg>
<svg class="a" style="left:38px;top:165.5px" width="12" height="12" viewBox="0 0 12 12"><path d="M1.5 1.5H10.5L6 11Z" fill="none" stroke="#a86c34" stroke-width="2.2" stroke-linejoin="round"/></svg>
<span class="lbl" style="left:56.6px;top:166.3px;color:#888">Breadboard</span>
<svg class="a" style="left:24px;top:184.5px" width="6" height="9" viewBox="0 0 6 9"><path d="M0.8 0.8L4.8 4.5L0.8 8.2" fill="none" stroke="#666" stroke-width="1.1"/></svg>
<svg class="a" style="left:38px;top:183.0px" width="12" height="12" viewBox="0 0 12 12"><path d="M1.5 1.5H10.5L6 11Z" fill="none" stroke="#a86c34" stroke-width="2.2" stroke-linejoin="round"/></svg>
<span class="lbl" style="left:56.6px;top:183.8px;color:#888">Display</span>
<svg class="a" style="left:24px;top:202.0px" width="6" height="9" viewBox="0 0 6 9"><path d="M0.8 0.8L4.8 4.5L0.8 8.2" fill="none" stroke="#666" stroke-width="1.1"/></svg>
<svg class="a" style="left:38px;top:200.5px" width="12" height="12" viewBox="0 0 12 12"><path d="M1.5 1.5H10.5L6 11Z" fill="none" stroke="#a86c34" stroke-width="2.2" stroke-linejoin="round"/></svg>
<span class="lbl" style="left:56.6px;top:201.3px;color:#888">Handle</span>
<svg class="a" style="left:24px;top:219.5px" width="6" height="9" viewBox="0 0 6 9"><path d="M0.8 0.8L4.8 4.5L0.8 8.2" fill="none" stroke="#666" stroke-width="1.1"/></svg>
<svg class="a" style="left:38px;top:218.0px" width="12" height="12" viewBox="0 0 12 12"><path d="M1.5 1.5H10.5L6 11Z" fill="none" stroke="#a86c34" stroke-width="2.2" stroke-linejoin="round"/></svg>
<span class="lbl" style="left:56.6px;top:218.8px;color:#999">Hinge_part</span>
<svg class="a" style="left:24px;top:237.0px" width="6" height="9" viewBox="0 0 6 9"><path d="M0.8 0.8L4.8 4.5L0.8 8.2" fill="none" stroke="#666" stroke-width="1.1"/></svg>
<svg class="a" style="left:38px;top:235.5px" width="12" height="12" viewBox="0 0 12 12"><path d="M1.5 1.5H10.5L6 11Z" fill="none" stroke="#a86c34" stroke-width="2.2" stroke-linejoin="round"/></svg>
<span class="lbl" style="left:56.6px;top:236.3px;color:#999">Hinge_part</span>
<svg class="a" style="left:24px;top:254.5px" width="6" height="9" viewBox="0 0 6 9"><path d="M0.8 0.8L4.8 4.5L0.8 8.2" fill="none" stroke="#666" stroke-width="1.1"/></svg>
<svg class="a" style="left:38px;top:253.0px" width="12" height="12" viewBox="0 0 12 12"><path d="M1.5 1.5H10.5L6 11Z" fill="none" stroke="#a86c34" stroke-width="2.2" stroke-linejoin="round"/></svg>
<span class="lbl" style="left:56.6px;top:253.8px;color:#999">Hinge_part</span>
<svg class="a" style="left:24px;top:272.0px" width="6" height="9" viewBox="0 0 6 9"><path d="M0.8 0.8L4.8 4.5L0.8 8.2" fill="none" stroke="#666" stroke-width="1.1"/></svg>
<svg class="a" style="left:38px;top:270.5px" width="12" height="12" viewBox="0 0 12 12"><path d="M1.5 1.5H10.5L6 11Z" fill="none" stroke="#a86c34" stroke-width="2.2" stroke-linejoin="round"/></svg>
<span class="lbl" style="left:56.6px;top:271.3px;color:#999">Hinge_part</span>
<svg class="a" style="left:24px;top:289.5px" width="6" height="9" viewBox="0 0 6 9"><path d="M0.8 0.8L4.8 4.5L0.8 8.2" fill="none" stroke="#666" stroke-width="1.1"/></svg>
<svg class="a" style="left:38px;top:288.0px" width="12" height="12" viewBox="0 0 12 12"><path d="M1.5 1.5H10.5L6 11Z" fill="none" stroke="#a86c34" stroke-width="2.2" stroke-linejoin="round"/></svg>
<span class="lbl" style="left:56.6px;top:288.8px;color:#888">Logo.001</span>
<svg class="a" style="left:24px;top:307.0px" width="6" height="9" viewBox="0 0 6 9"><path d="M0.8 0.8L4.8 4.5L0.8 8.2" fill="none" stroke="#666" stroke-width="1.1"/></svg>
<svg class="a" style="left:38px;top:305.5px" width="12" height="12" viewBox="0 0 12 12"><path d="M1.5 1.5H10.5L6 11Z" fill="none" stroke="#a86c34" stroke-width="2.2" stroke-linejoin="round"/></svg>
<span class="lbl" style="left:56.6px;top:306.3px;color:#888">Test_1</span>
</div>
<div class="a" id="prop">
  <div class="a" style="left:0;top:0;width:82px;height:22px;background:#252525;border-top-left-radius:6px"></div>
  <div class="btn" style="left:9px;top:3.3px;width:24.7px;height:15.5px;background:#1c1c1c"></div>
  <svg class="a" style="left:12px;top:5px" width="12" height="12" viewBox="0 0 12 12"><rect x="0.5" y="0.5" width="11" height="4.5" rx="2.25" fill="#e0e0e0"/><rect x="0.5" y="6.5" width="11" height="4.5" rx="2.25" fill="#e0e0e0"/><circle cx="8.8" cy="2.75" r="1.6" fill="#222"/><circle cx="8.8" cy="8.75" r="1.6" fill="#222"/></svg>
  <svg class="a" style="left:25px;top:8px" width="8" height="5" viewBox="0 0 8 5"><path d="M0.7 0.7L4 4L7.3 0.7" fill="none" stroke="#ccc" stroke-width="1.1"/></svg>
  <div class="a" style="left:0;top:22px;width:24.5px;height:481px;background:#141414"></div>
  <div class="a" style="left:24.5px;top:22px;width:6px;height:481px;background:#1e1e1e"></div>
  <div class="a" style="left:2.5px;top:339.5px;width:22.2px;height:22.8px;background:#262626;border-radius:4px 0 0 4px"></div>
  <svg class="a" style="left:6.9px;top:34.5px" width="13" height="13" viewBox="0 0 13 13"><path d="M3 1V8" stroke="#ccc" stroke-width="1.2"/><circle cx="3" cy="10" r="2.2" fill="#ccc"/><path d="M8.5 1.5V3.5L10 5L11.5 3.5V1.5M10 5V12" fill="none" stroke="#ccc" stroke-width="1.6"/></svg>
<svg class="a" style="left:6.9px;top:66.5px" width="13" height="13" viewBox="0 0 13 13"><rect x="1" y="3.5" width="11" height="8" rx="1" fill="none" stroke="#ccc" stroke-width="1.1"/><rect x="4" y="1.5" width="4" height="2" fill="#ccc"/><rect x="3" y="6" width="5" height="3" fill="none" stroke="#888" stroke-width="0.8"/><circle cx="10" cy="6" r="0.6" fill="#ccc"/><circle cx="10" cy="9" r="0.6" fill="#ccc"/></svg>
<svg class="a" style="left:6.9px;top:90.8px" width="13" height="13" viewBox="0 0 13 13"><rect x="0.5" y="1" width="12" height="3.5" rx="1" fill="#ccc"/><rect x="3" y="4.5" width="7" height="7" fill="#777"/><path d="M4 10L6 7L8 10Z" fill="#ccc"/></svg>
<svg class="a" style="left:6.9px;top:115.5px" width="13" height="13" viewBox="0 0 13 13"><rect x="4" y="1" width="8" height="8" fill="none" stroke="#ccc" stroke-width="1"/><path d="M2.5 3V10.5H10M1 4.5V12H8.5" fill="none" stroke="#999" stroke-width="0.9"/><path d="M5 8L7.5 4L9 6.5L11 8Z" fill="#ccc"/></svg>
<svg class="a" style="left:6.9px;top:140.5px" width="13" height="13" viewBox="0 0 13 13"><path d="M4.5 2L1 10H8Z" fill="#bbb"/><circle cx="10" cy="3" r="1.6" fill="#ccc"/><circle cx="8" cy="9.5" r="3" fill="none" stroke="#aaa" stroke-width="1.1"/></svg>
<svg class="a" style="left:6.9px;top:164.7px" width="13" height="13" viewBox="0 0 13 13"><circle cx="6.5" cy="6.5" r="5" fill="none" stroke="#c8406a" stroke-width="1.3"/><path d="M3.5 3L7 5L5 9L8 11M8 2L10 6" fill="none" stroke="#c8406a" stroke-width="1.8"/></svg>
<svg class="a" style="left:6.9px;top:196.3px" width="13" height="13" viewBox="0 0 13 13"><g fill="none" stroke="#c87a3a" stroke-width="1"><path d="M0.5 3V0.5H3M10 0.5H12.5V3M12.5 10V12.5H10M3 12.5H0.5V10"/></g><rect x="2.5" y="2.5" width="8" height="8" fill="#e08a40"/></svg>
<svg class="a" style="left:6.9px;top:221.1px" width="13" height="13" viewBox="0 0 13 13"><path d="M2 11L7 6A3 3 0 0 1 10.5 1.5L9 3.5L10.5 5L12 3.5A3 3 0 0 1 8 7L3 12Z" fill="#6a8ee0"/></svg>
<svg class="a" style="left:6.9px;top:245.8px" width="13" height="13" viewBox="0 0 13 13"><circle cx="2.5" cy="2.5" r="2" fill="#6a8ee0"/><path d="M2.5 2.5H11M2.5 2.5V11.5M2.5 2.5L11 11" stroke="#6a8ee0" stroke-width="1"/><circle cx="11" cy="2.5" r="1" fill="#6a8ee0"/><circle cx="2.5" cy="11.5" r="1" fill="#6a8ee0"/><circle cx="11" cy="11" r="1.3" fill="#6a8ee0"/></svg>
<svg class="a" style="left:6.9px;top:270.6px" width="13" height="13" viewBox="0 0 13 13"><path d="M9 2.5A5 5 0 1 0 11 9" fill="none" stroke="#6a6ac8" stroke-width="1.1"/><circle cx="6" cy="7" r="2.5" fill="#7a9ae8"/><circle cx="11" cy="2.5" r="1.3" fill="#7a9ae8"/></svg>
<svg class="a" style="left:6.9px;top:295.4px" width="13" height="13" viewBox="0 0 13 13"><path d="M1.5 9A4 4 0 0 0 6 12L11.5 4A2.5 2.5 0 0 0 8 1L2 6Z" fill="none" stroke="#6a8ee0" stroke-width="1.1"/><circle cx="5" cy="8" r="2.2" fill="none" stroke="#6a8ee0" stroke-width="1.1"/><circle cx="5" cy="8" r="0.8" fill="#6a8ee0"/></svg>
<svg class="a" style="left:6.9px;top:319.2px" width="13" height="13" viewBox="0 0 13 13"><path d="M1.5 1.5H11.5L6.5 11Z" fill="none" stroke="#1ec878" stroke-width="1.2"/><rect x="0" y="0" width="3" height="3" fill="none" stroke="#1ec878"/><rect x="10" y="0" width="3" height="3" fill="none" stroke="#1ec878"/><rect x="5" y="10" width="3" height="3" fill="none" stroke="#1ec878"/></svg>
<svg class="a" style="left:6.9px;top:343.9px" width="13" height="13" viewBox="0 0 13 13"><circle cx="6.5" cy="6.5" r="5.5" fill="#d85a7a"/><path d="M6.5 1A5.5 5.5 0 0 0 1 6.5H6.5Z" fill="#1a1a1a"/><path d="M6.5 6.5H12A5.5 5.5 0 0 1 6.5 12Z" fill="#1a1a1a"/><circle cx="6.5" cy="6.5" r="5.6" fill="none" stroke="#c86a80" stroke-width="0.9"/></svg>

  <!-- object row -->
  <svg class="a" style="left:34px;top:31.5px" width="13" height="13" viewBox="0 0 13 13"><g fill="none" stroke="#aaa" stroke-width="1"><path d="M0.5 3V0.5H3M10 0.5H12.5V3M12.5 10V12.5H10M3 12.5H0.5V10"/></g><rect x="3" y="3" width="7" height="7" fill="#e0e0e0"/></svg>
  <span class="lbl" style="left:54.8px;top:32.8px;color:#d0d0d0">Keyboard</span>
  <!-- material slots list -->
  <div class="a" style="left:33px;top:61.7px;width:49px;height:67.7px;background:#181818;border-radius:4px 0 0 4px"></div>
  <div class="a" style="left:37px;top:66.3px;width:45px;height:15.5px;background:#4772b3;border-radius:3px 0 0 3px"></div>
  <svg class="a" style="left:45.5px;top:68.5px" width="11" height="11" viewBox="0 0 11 11"><circle cx="5.5" cy="5.5" r="5" fill="#0a0a0a"/><circle cx="3.8" cy="3.8" r="1.2" fill="#666"/></svg>
  <span class="lbl" style="left:63.4px;top:68px;color:#e8e8e8">BLACK</span>
  <svg class="a" style="left:41.5px;top:118px" width="7" height="8" viewBox="0 0 7 8"><path d="M0.5 0.5L6.5 4L0.5 7.5Z" fill="#aaa"/></svg>
  <!-- material selector -->
  <div class="a" style="left:33px;top:136.8px;width:26px;height:15px;background:#222;border-radius:3px 0 0 3px"></div>
  <svg class="a" style="left:35.5px;top:138.5px" width="12" height="12" viewBox="0 0 12 12"><circle cx="6" cy="6" r="5.2" fill="#e8e8e8"/><path d="M6 0.8A5.2 5.2 0 0 0 0.8 6H6Z" fill="#333"/><path d="M6 6H11.2A5.2 5.2 0 0 1 6 11.2Z" fill="#333"/><circle cx="6" cy="6" r="5.2" fill="none" stroke="#e8e8e8" stroke-width="0.8"/></svg>
  <svg class="a" style="left:49.5px;top:142px" width="7" height="5" viewBox="0 0 8 5"><path d="M0.7 0.7L4 4L7.3 0.7" fill="none" stroke="#ccc" stroke-width="1.1"/></svg>
  <div class="a" style="left:60px;top:136.8px;width:22px;height:15px;background:#141414"></div>
  <span class="lbl" style="left:66px;top:138.3px;color:#d8d8d8">BLACK</span>
  <!-- preview panel -->
  <div class="a" style="left:31.7px;top:162px;width:50.3px;height:173.6px;background:#2b2b2b;border-radius:4px 0 0 4px"></div>
  <svg class="a" style="left:40px;top:170.5px" width="9" height="6" viewBox="0 0 9 6"><path d="M0.8 0.8L4.5 4.8L8.2 0.8" fill="none" stroke="#c8c8c8" stroke-width="1.2"/></svg>
  <span class="lbl" style="left:51.4px;top:167.9px;color:#e0e0e0;font-size:11px">Preview</span>
  <svg class="a" style="left:39.5px;top:191.6px" width="42.5" height="132" viewBox="0 0 42.5 132"><defs><clipPath id="pc"><rect x="0" y="0" width="60" height="132" rx="4"/></clipPath></defs><g clip-path="url(#pc)" shape-rendering="geometricPrecision"><path d="M-2.00 0.00L7.00 0.00L3.00 8.91L-2.00 8.91Z" fill="#959595"/><path d="M7.00 0.00L31.22 0.00L27.21 8.91L3.00 8.91Z" fill="#464646"/><path d="M31.22 0.00L44.50 0.00L44.50 8.91L27.21 8.91Z" fill="#959595"/><path d="M-2.00 8.91L25.64 8.91L20.30 20.78L-2.00 20.78Z" fill="#959595"/><path d="M25.64 8.91L44.50 8.91L44.50 20.78L20.30 20.78Z" fill="#464646"/><path d="M-2.00 20.78L17.86 20.78L12.45 32.81L-2.00 32.81Z" fill="#464646"/><path d="M17.86 20.78L42.86 20.78L37.45 32.81L12.45 32.81Z" fill="#959595"/><path d="M42.86 20.78L44.50 20.78L44.50 32.81L37.45 32.81Z" fill="#464646"/><path d="M-2.00 32.81L11.46 32.81L4.79 47.66L-2.00 47.66Z" fill="#959595"/><path d="M11.46 32.81L39.59 32.81L32.91 47.66L4.79 47.66Z" fill="#464646"/><path d="M39.59 32.81L44.50 32.81L44.50 47.66L32.91 47.66Z" fill="#959595"/><path d="M-2.00 47.66L32.73 47.66L25.70 63.28L-2.00 63.28Z" fill="#959595"/><path d="M32.73 47.66L44.50 47.66L44.50 63.28L25.70 63.28Z" fill="#464646"/><path d="M-2.00 63.28L26.34 63.28L18.04 81.72L-2.00 81.72Z" fill="#464646"/><path d="M26.34 63.28L44.50 63.28L44.50 81.72L18.04 81.72Z" fill="#959595"/><path d="M-2.00 81.72L16.50 81.72L7.57 101.56L-2.00 101.56Z" fill="#959595"/><path d="M16.50 81.72L44.50 81.72L44.50 101.56L7.57 101.56Z" fill="#464646"/><path d="M-2.00 101.56L9.67 101.56L-1.23 125.78L-2.00 125.78Z" fill="#464646"/><path d="M9.67 101.56L44.82 101.56L33.93 125.78L-1.23 125.78Z" fill="#959595"/><path d="M44.82 101.56L44.50 101.56L44.50 125.78L33.93 125.78Z" fill="#464646"/><path d="M-2.00 125.78L36.09 125.78L33.28 132.03L-2.00 132.03Z" fill="#464646"/><path d="M36.09 125.78L44.50 125.78L44.50 132.03L33.28 132.03Z" fill="#959595"/></g></svg>
  <!-- surface panel -->
  <div class="a" style="left:31.5px;top:340.5px;width:50.5px;height:170px;background:#323232;border-radius:4px 0 0 0"></div>
  <svg class="a" style="left:40px;top:349.5px" width="9" height="6" viewBox="0 0 9 6"><path d="M0.8 0.8L4.5 4.8L8.2 0.8" fill="none" stroke="#c8c8c8" stroke-width="1.2"/></svg>
  <span class="lbl" style="left:51.5px;top:346.8px;color:#e0e0e0;font-size:11px">Surface</span>
</div>

</body></html>
